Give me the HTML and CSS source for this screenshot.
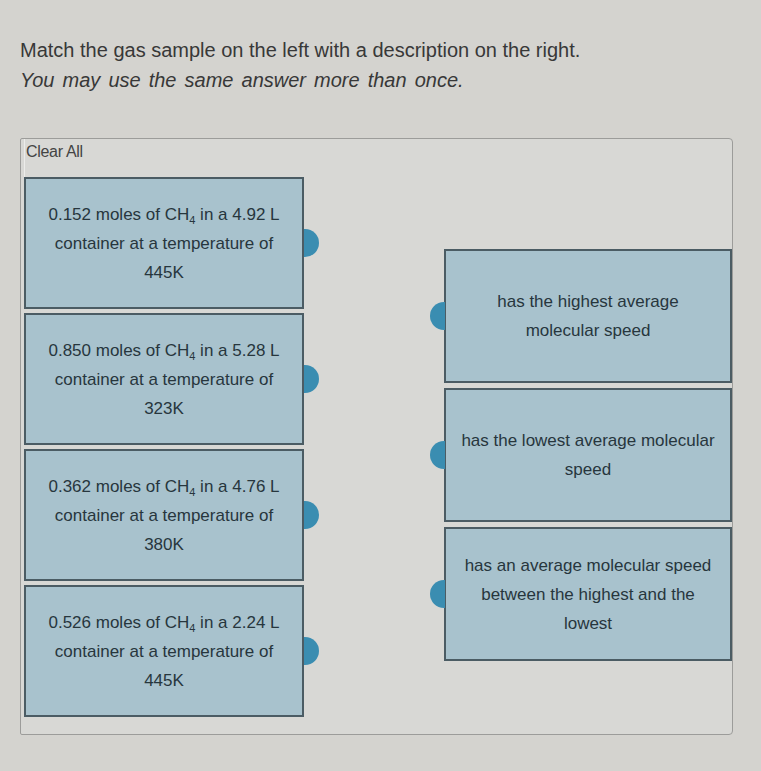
FILE: index.html
```html
<!DOCTYPE html>
<html>
	<head>
		<meta charset="utf-8">
		<title>Match the gas sample</title>
		<link rel="stylesheet" href="styles.css">
	</head>
	<body>
		<div class="prompt">
			<p>Match the gas sample on the left with a description on the right.</p>
			<p class="hint">You may use the same answer more than once.</p>
		</div>
		<div class="panel">
			<div class="col-left">
				<div class="toolbar"><span class="clear">Clear All</span></div>
				<div class="card card-src">
					<p>0.152 moles of CH<sub>4</sub> in a 4.92 L container at a temperature of 445K</p>
					<span class="tab"></span>
				</div>
				<div class="card card-src">
					<p>0.850 moles of CH<sub>4</sub> in a 5.28 L container at a temperature of 323K</p>
					<span class="tab"></span>
				</div>
				<div class="card card-src">
					<p>0.362 moles of CH<sub>4</sub> in a 4.76 L container at a temperature of 380K</p>
					<span class="tab"></span>
				</div>
				<div class="card card-src">
					<p>0.526 moles of CH<sub>4</sub> in a 2.24 L container at a temperature of 445K</p>
					<span class="tab"></span>
				</div>
			</div>
			<div class="col-right">
				<div class="card card-dst">
					<p>has the highest average molecular speed</p>
					<span class="tab"></span>
				</div>
				<div class="card card-dst">
					<p>has the lowest average molecular speed</p>
					<span class="tab"></span>
				</div>
				<div class="card card-dst">
					<p>has an average molecular speed between the highest and the lowest</p>
					<span class="tab"></span>
				</div>
			</div>
		</div>
	</body>
</html>
```
FILE: styles.css
```css
* {
	margin: 0;
	padding: 0;
	box-sizing: border-box;
}

body {
	background: #d4d3cf;
	font-family: "Liberation Sans", Arial, sans-serif;
	color: #333;
}

.prompt {
	padding: 35px 0 0 20px;
	font-size: 20px;
	line-height: 30px;
	color: #383838;
}

.prompt .hint {
	font-style: italic;
	word-spacing: 2.5px;
}

.panel {
	display: flex;
	width: 713px;
	height: 597px;
	margin: 43px 0 0 20px;
	background: #d8d8d5;
	border: 1px solid #9c9c9a;
	border-radius: 2px 4px 4px 2px;
}

.col-left {
	width: 284px;
	padding-left: 3px;
}

.toolbar {
	height: 38px;
	padding: 4px 0 0 1px;
	border-left: 1px solid #ececea;
}

.clear {
	font-size: 16px;
	color: #444;
	letter-spacing: -0.3px;
}

.col-right {
	width: 288px;
	margin: 110px 0 0 auto;
}

.card {
	position: relative;
	display: flex;
	align-items: center;
	justify-content: center;
	background: #a8c2cd;
	border: 2px solid #4b5c64;
	font-size: 17px;
	line-height: 29px;
	color: #27363d;
	text-align: center;
}

.card-src {
	width: 280px;
	height: 132px;
	margin-bottom: 4px;
	padding: 0 20px;
}

.card-dst {
	height: 134px;
	margin-bottom: 5px;
	padding: 0 14px;
}

.card sub {
	font-size: 11px;
	line-height: 0;
	vertical-align: -4px;
}

.tab {
	position: absolute;
	top: 50%;
	width: 15px;
	height: 28px;
	margin-top: -14px;
	background: #3a8db1;
}

.card-src .tab {
	right: -17px;
	border-radius: 0 14px 14px 0;
}

.card-dst .tab {
	left: -16px;
	border-radius: 14px 0 0 14px;
}
```
